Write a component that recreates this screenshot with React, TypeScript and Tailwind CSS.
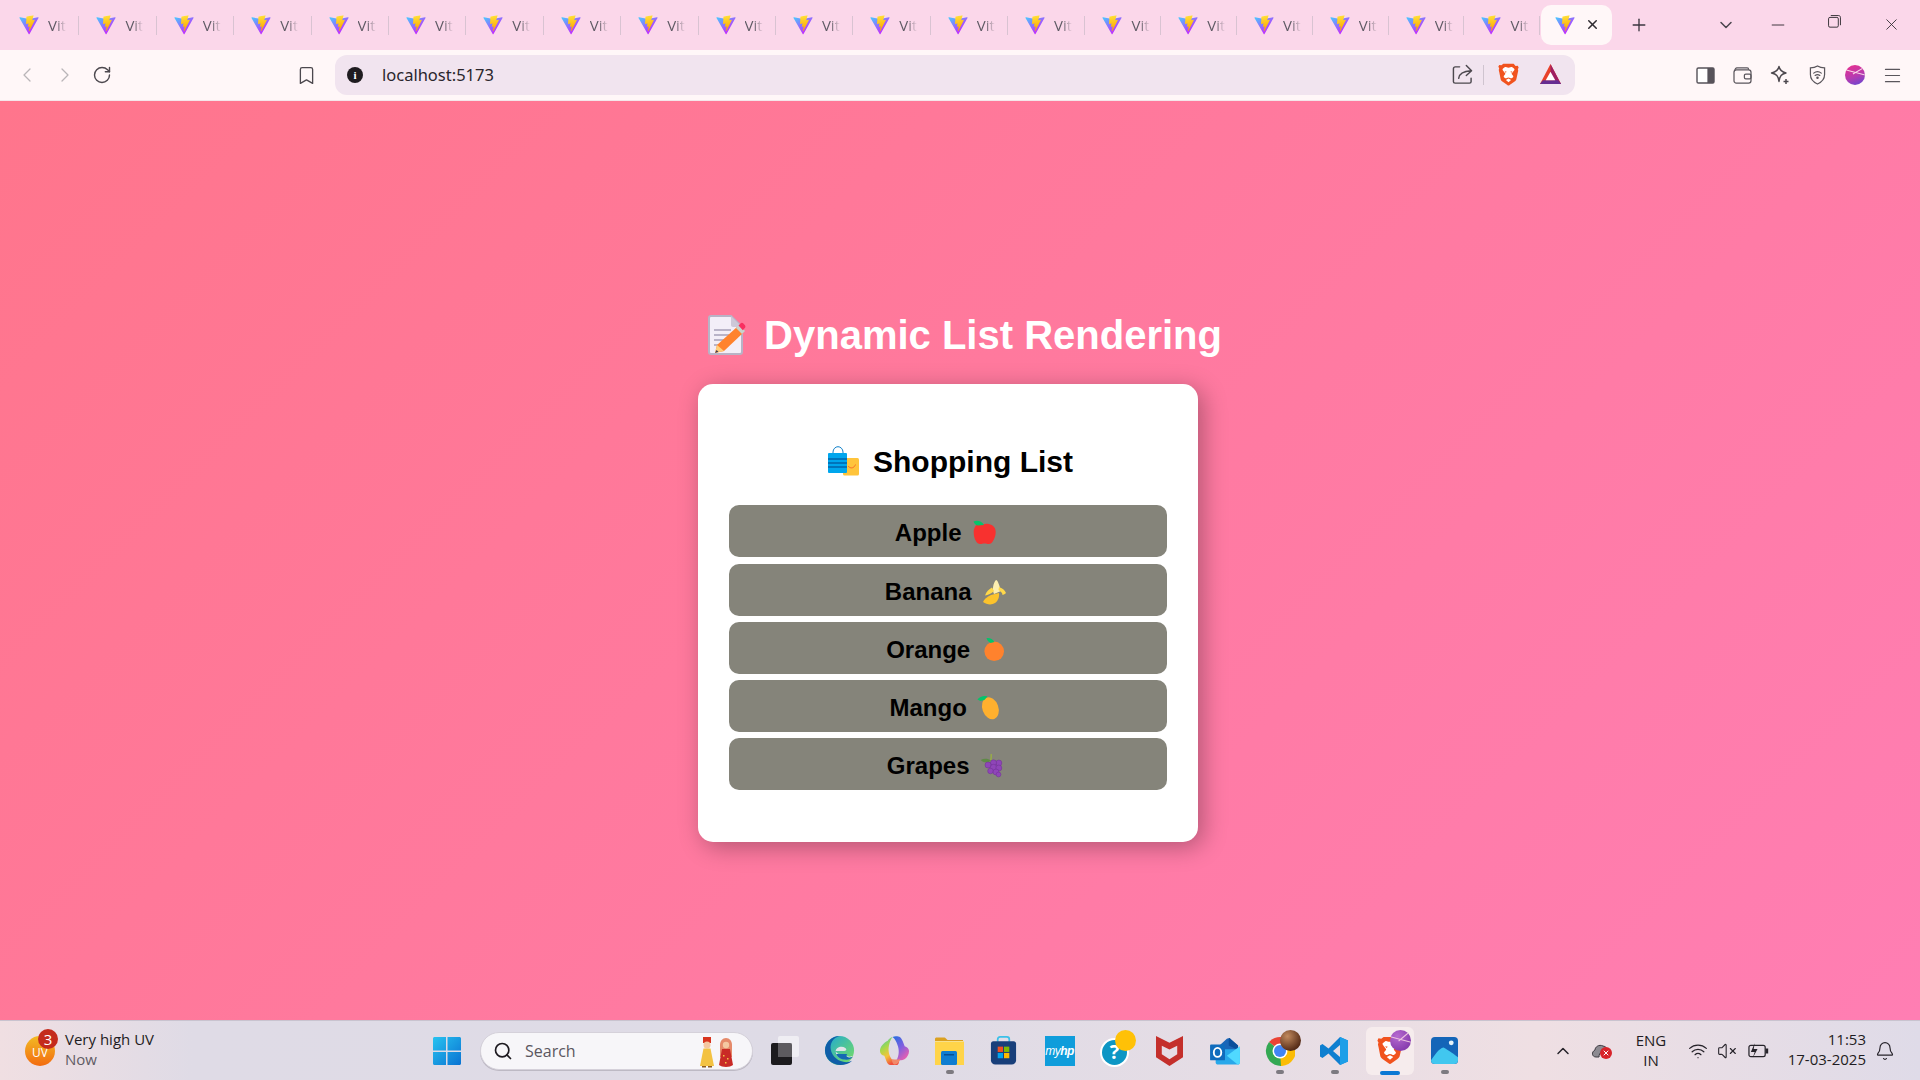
import {
  ChevronDown,
  ChevronLeft,
  ChevronRight,
  ChevronUp,
  Bell,
  Bookmark,
  Menu,
  Minus,
  Plus,
  RotateCw,
  Search,
  Wifi,
  VolumeX,
  X,
} from "lucide-react"
import type { ReactNode } from "react"

const VitePaths = () => (
  <>
    <defs>
      <linearGradient id="viteA" x1="6" y1="33" x2="235" y2="344" gradientUnits="userSpaceOnUse">
        <stop stopColor="#41D1FF" />
        <stop offset="1" stopColor="#BD34FE" />
      </linearGradient>
      <linearGradient id="viteB" x1="194" y1="8" x2="236" y2="292" gradientUnits="userSpaceOnUse">
        <stop stopColor="#FFEA83" />
        <stop offset="0.08" stopColor="#FFDD35" />
        <stop offset="1" stopColor="#FFA800" />
      </linearGradient>
    </defs>
    <path
      d="M399.641 59.5246L215.643 388.545C211.844 395.338 202.084 395.378 198.228 388.618L10.5817 59.5563C6.38087 52.1896 12.6802 43.2665 21.0281 44.7586L205.223 77.6824C206.398 77.8924 207.601 77.8904 208.776 77.6763L389.119 44.8058C397.439 43.2894 403.768 52.1434 399.641 59.5246Z"
      fill="url(#viteA)"
    />
    <path
      d="M292.965 1.5744L156.801 28.2552C154.563 28.6937 152.906 30.5903 152.771 32.8664L144.395 174.33C144.198 177.662 147.258 180.248 150.51 179.498L188.42 170.749C191.967 169.931 195.172 173.055 194.443 176.622L183.18 231.775C182.422 235.487 185.907 238.661 189.532 237.56L212.947 230.446C216.577 229.344 220.065 232.527 219.297 236.242L201.398 322.875C200.278 328.294 207.486 331.249 210.492 326.603L212.5 323.5L323.454 102.072C325.312 98.3645 322.108 94.137 318.036 94.9228L279.014 102.454C275.347 103.161 272.227 99.746 273.262 96.1583L298.731 7.86689C299.767 4.27314 296.636 0.855181 292.965 1.5744Z"
      fill="url(#viteB)"
    />
  </>
)

const ViteIcon = () => (
  <svg viewBox="0 0 410 404" className="w-5 h-5 shrink-0">
    <VitePaths />
  </svg>
)

function ViteTab({ wide }: { wide: boolean }) {
  return (
    <div className={`${wide ? "w-[77.4px]" : "w-[75.8px]"} h-[50px] shrink-0 flex items-center pl-[17px] relative`}>
      <ViteIcon />
      <span className="ml-[9px] text-[15px] bg-[linear-gradient(90deg,#5c5862_45%,#5c586200)] bg-clip-text text-transparent">
        Vit
      </span>
      <span className="absolute right-0 top-[16px] h-[19px] w-px bg-[#d9c3d2]" />
    </div>
  )
}

function Cell({ children }: { children: ReactNode }) {
  return <div className="w-[37.4px] h-[38px] shrink-0 flex items-center justify-center">{children}</div>
}

const BraveLion = ({ size = 22 }: { size?: number }) => (
  <svg viewBox="0 0 24 28" width={size} height={size * 1.15}>
    <path
      d="M6 1h12l2.2 2.6 2.6-.4 1 2.2-1 1.6.5 2-.6 2.6-1.6 7.2c-.4 1.4-1.2 2.2-2.4 3l-5 3.4c-1 .7-1.4 1-1.7 1s-.7-.3-1.7-1l-5-3.4c-1.2-.8-2-1.6-2.4-3L1.3 10.6.7 8l.5-2-1-1.6 1-2.2 2.6.4z"
      fill="#f1531e"
    />
    <path
      d="M12 5.5c1.6 0 3-.8 3.6-.8.8 0 3.4 2 3.4 2.7 0 .8-3.4 4.4-3.4 5.2 0 .9 2 2 2 3s-2 2.2-2.6 2.2c-.8 0-1.4-1-3-1s-2.2 1-3 1c-.6 0-2.6-1.2-2.6-2.2s2-2.1 2-3c0-.8-3.4-4.4-3.4-5.2 0-.7 2.6-2.7 3.4-2.7.6 0 2 .8 3.6.8z"
      fill="#fff"
    />
    <path d="M9 19.6 12 18l3 1.6-3 2.6z" fill="#fff" />
    <path d="M7.5 9.5l2.5.6-1.4 1.2zM16.5 9.5l-2.5.6 1.4 1.2z" fill="#f1531e" />
  </svg>
)

function Emoji({ children }: { children: ReactNode }) {
  return (
    <svg viewBox="1 0 33 32" width={33} height={32} className="inline-block shrink-0">
      {children}
    </svg>
  )
}

const fruits: { name: string; icon: ReactNode }[] = [
  {
    name: "Apple",
    icon: (
      <>
        <path d="M11 9c2-.6 3.700-.2 5.300.3 1.700-.6 3.600-.9 5.500-.3 4.200 1 6.900 3.600 6.900 8 0 3.300-1.100 6.300-2.700 9-1 1.800-2.400 3-4.300 3-1.500 0-2.400-.6-4.200-.6s-2.800.6-4.300.6c-1.900 0-3.300-1.200-4.300-3-1.600-2.700-2.200-5.700-2.200-9 0-4.100 2.300-7.200 4.300-8z" fill="#f8312f" />
        <path d="M6.500 6.500c3.500-1.300 8-.8 10.500 3.500l-6.500.6c-2-.6-3.500-2.200-4-4.100z" fill="#05c46b" />
      </>
    ),
  },
  {
    name: "Banana",
    icon: (
      <>
        <path d="M19 6c2 0 3.500 6 5 11l-7 3c-2-4-1-11 2-14z" fill="#fdefb0" />
        <path d="M6 28c1-3 4-5 8-7l8-2c.5 4-1 8-4 10-3 2-8 2-12-1z" fill="#fcc32c" />
        <path d="M15 13.500c-3 1.500-6 4.500-7 8 3-.5 6.500-2 9-4.500z" fill="#ffd84a" />
        <path d="M22 13c3 1 6 3 7 6-.2.500-3 2-3.500 2 .2-2-2-4-4-5z" fill="#ffd84a" />
      </>
    ),
  },
  {
    name: "Orange",
    icon: (
      <>
        <ellipse cx="18.200" cy="19.300" rx="9.800" ry="9.700" fill="#ff822d" />
        <path d="M10.500 6c3-.5 6 .5 8 4l-4 1c-2-1-3.500-3-4-5z" fill="#05c46b" />
      </>
    ),
  },
  {
    name: "Mango",
    icon: (
      <>
        <ellipse cx="17.400" cy="18.300" rx="8" ry="11.300" transform="rotate(-20 17.400 18.300)" fill="#ffb02e" />
        <path d="M4.400 9.500c2.500-3 6.500-4.200 10-3l-3 3.500-4 1z" fill="#05c46b" />
      </>
    ),
  },
  {
    name: "Grapes",
    icon: (
      <>
        <path d="M15.600 6l1.200.1c.1 2.500-.1 4.700-.5 6.900l-1.200-.1c.4-2.300.5-4.600.5-6.900z" fill="#9cb53b" />
        <path d="M5.700 12c3-1.800 7-1.800 10.300.4-2.500 2.500-7.700 2.800-10.300-.4z" fill="#5f8a46" />
        <g fill="#8f45b8" stroke="#6f2f94" strokeWidth=".5">
          <circle cx="23.800" cy="15" r="3" />
          <circle cx="18.500" cy="14.800" r="3" />
          <circle cx="13" cy="17" r="3" />
          <circle cx="18.500" cy="19.500" r="3.200" />
          <circle cx="23.800" cy="20" r="3" />
          <circle cx="15.500" cy="23" r="2.800" />
          <circle cx="21" cy="24" r="3" />
          <circle cx="23.500" cy="26.500" r="2.400" />
        </g>
      </>
    ),
  },
]

function Taskbar({ children, dot, ml }: { children: ReactNode; dot?: boolean; ml?: string }) {
  return (
    <div className={`w-[55px] h-[48px] shrink-0 flex items-center justify-center relative ${ml ?? ""}`}>
      {children}
      {dot && <span className="absolute bottom-[1px] left-[24px] w-[8px] h-[4px] rounded-full bg-[#7d7a80]" />}
    </div>
  )
}

const Overlay = ({ c1, c2, c3, lines }: { c1: string; c2: string; c3?: string; lines?: boolean }) => (
  <span
    className={`absolute top-[3px] ${lines ? "right-[3px]" : "right-[6px]"} w-[21px] h-[21px] rounded-full overflow-hidden`}
    style={{ background: `radial-gradient(circle at 35% 30%, ${c1}, ${c2} 70%, ${c3 ?? c2})` }}
  >
    {lines && (
      <>
        <span className="absolute left-0 top-[9px] w-[22px] h-px rotate-[15deg] bg-[#eec4e0]" />
        <span className="absolute left-[7px] top-[6px] w-[14px] h-px rotate-[-40deg] bg-[#eec4e0]" />
      </>
    )}
  </span>
)

export default function App() {
  return (
    <div className="h-screen w-full overflow-hidden flex flex-col font-['Open_Sans',sans-serif]">
      {/* tab strip */}
      <div className="h-[50px] shrink-0 bg-[#fbd7ea] flex items-center pl-[2px]">
        {Array.from({ length: 14 }).map((_, i) => (
          <ViteTab key={i} wide />
        ))}
        {Array.from({ length: 6 }).map((_, i) => (
          <ViteTab key={i} wide={false} />
        ))}
        <div className="ml-[1px] mt-[-1px] w-[71px] h-[40px] shrink-0 rounded-[10px] bg-[#fff7f8] flex items-center pl-[14px]">
          <ViteIcon />
          <X size={15} strokeWidth={2.4} className="ml-[10px] text-[#2f2b30]" />
        </div>
        <div className="w-[44px] ml-[5px] flex justify-center">
          <Plus size={20} strokeWidth={1.6} className="text-[#3b3740]" />
        </div>
        <ChevronDown size={20} strokeWidth={1.8} className="ml-[55px] text-[#4a454d]" />
        <div className="ml-auto flex text-[#2f2b30]">
          <div className="w-[56.5px] flex justify-center">
            <Minus size={20} strokeWidth={1.1} />
          </div>
          <div className="w-[56.5px] flex justify-center">
            <svg viewBox="0 0 14 14" className="w-[13px] h-[13px]" fill="none" stroke="currentColor" strokeWidth="1">
              <rect x="0.6" y="2.6" width="10.5" height="10.5" rx="1.5" />
              <path d="M3 .6h8.500c1 0 1.900.9 1.900 1.900V11" />
            </svg>
          </div>
          <div className="w-[56.5px] ml-[1px] flex justify-center">
            <X size={19} strokeWidth={1.1} />
          </div>
        </div>
      </div>

      {/* toolbar */}
      <div className="h-[51px] shrink-0 bg-[#fff7f8] border-b border-[#f4e6ea] flex items-center pl-[8px] pr-[9px]">
        <div className="w-[38px] flex justify-center">
          <ChevronLeft size={24} strokeWidth={1.3} className="text-[#b9b5b8]" />
        </div>
        <div className="w-[37px] flex justify-center">
          <ChevronRight size={24} strokeWidth={1.3} className="text-[#b9b5b8]" />
        </div>
        <div className="w-[37px] flex justify-center">
          <RotateCw size={20} strokeWidth={1.7} className="text-[#4c484e]" />
        </div>
        <div className="ml-[167px] w-[38px] flex justify-center">
          <Bookmark size={21} strokeWidth={1.5} className="text-[#4c484e]" />
        </div>
        <div className="ml-[10px] w-[1240px] h-[40px] rounded-[12px] bg-[#f1e4ef] flex items-center pl-[12px] pr-[13px]">
          <span className="w-4 h-4 rounded-full bg-[#1f1c20] flex items-center justify-center text-white text-[11px] font-bold font-['Liberation_Serif',serif]">
            i
          </span>
          <span className="ml-[19px] text-[16.5px] text-[#2a262c] font-['Noto_Sans',sans-serif]">localhost:5173</span>
          <div className="ml-auto flex items-center">
            <svg viewBox="0 0 22 22" className="w-[21px] h-[21px]" fill="none" stroke="#4c484e" strokeWidth="1.5" strokeLinecap="round" strokeLinejoin="round">
              <path d="M8 3H3.500C2.300 3 1.500 4 1.500 5v13.500c0 1 .8 1.500 1.800 1.500h15c1 0 1.700-.6 1.700-1.500V15" />
              <path d="M7 15c.5-5 4-7.500 13-8M15 1.500l5.500 5.500-5.500 5" />
            </svg>
            <span className="ml-[10px] h-[20px] w-px bg-[#cfc4cf]" />
            <span className="ml-[14px] flex">
              <BraveLion size={21} />
            </span>
            <svg viewBox="0 0 24 22" className="ml-[20px] w-[23px] h-[21px]">
              <path d="M12 0 23 21H1z" fill="#e8412a" />
              <path d="M12 0 23 21h-6L12 11z" fill="#9e1f63" />
              <path d="M1 21h22l-3-4H4z" fill="#662d91" />
              <path d="M12 8l5 9H7z" fill="#fff" />
            </svg>
          </div>
        </div>
        <div className="ml-auto flex items-center text-[#5a565c]">
          <Cell>
            <svg viewBox="0 0 20 18" className="w-[19px] h-[17px]">
              <rect x="1" y="1" width="18" height="16" rx="1.5" fill="#fff" stroke="#57535a" strokeWidth="1.5" />
              <rect x="12" y="1" width="7" height="16" fill="#57535a" />
            </svg>
          </Cell>
          <Cell>
            <svg viewBox="0 0 20 18" className="w-[19px] h-[17px]" fill="none" stroke="#5a565c" strokeWidth="1.3">
              <path d="M2 3.500C2 2 3 1 4 1h11c1 0 1.500.8 1.500 1.800" />
              <rect x="1" y="3" width="18" height="14" rx="2.5" />
              <rect x="12" y="7.5" width="7" height="5" rx="1.5" />
            </svg>
          </Cell>
          <Cell>
            <svg viewBox="0 0 20 20" className="w-[20px] h-[20px]" fill="none" stroke="#4c484e" strokeWidth="1.4" strokeLinejoin="round">
              <path d="M9 1.500c.7 3.700 2.500 5.500 7 6.500-4.500 1-6.300 2.800-7 8.500-.7-5.700-2.500-7.500-7.500-8.500C6.500 7 8.300 5.200 9 1.500z" />
              <path d="M16 14v5M13.500 16.500h5" strokeWidth="1.5" />
            </svg>
          </Cell>
          <Cell>
            <svg viewBox="0 0 18 21" className="w-[17px] h-[20px]" fill="none" stroke="#5a565c" strokeWidth="1.3" strokeLinecap="round">
              <path d="M9 1c2 1.300 4.500 2 7.500 2v7c0 4.500-3 8-7.500 10-4.500-2-7.500-5.500-7.500-10V3C4.500 3 7 2.300 9 1z" />
              <path d="M5 8.500c2.400-2 5.600-2 8 0M6.500 11c1.500-1.200 3.500-1.200 5 0" />
              <circle cx="9" cy="13.5" r=".7" fill="#5a565c" />
            </svg>
          </Cell>
          <Cell>
            <span className="w-[20px] h-[20px] rounded-full bg-[linear-gradient(160deg,#ec2f8c,#b73bb0_55%,#5d47d6)] relative overflow-hidden">
              <span className="absolute left-0 top-[7px] w-[22px] h-px rotate-[15deg] bg-[#f8d8e8]" />
              <span className="absolute left-[7px] top-[5px] w-[14px] h-px rotate-[-30deg] bg-[#f8d8e8]" />
            </span>
          </Cell>
          <Cell>
            <Menu size={21} strokeWidth={1.4} className="text-[#5a565c]" />
          </Cell>
        </div>
      </div>

      {/* page */}
      <main className="flex-1 min-h-0 bg-[linear-gradient(135deg,#ff758c,#ff7eb3)] flex flex-col items-center pt-[210px]">
        <h1 className="ml-[10px] h-[48px] flex items-center text-[40px] font-bold text-white font-['Liberation_Sans',sans-serif]">
          <svg viewBox="0 0 38 40" className="w-[38px] h-[40px] mr-[18px]">
            <path d="M3 1h20l11 11v25c0 1.200-.9 2-2 2H3c-1.200 0-2-.8-2-2V3c0-1.200.8-2 2-2z" fill="#f3eef8" stroke="#b8b3c6" strokeWidth="2" />
            <path d="M23 1v9c0 1.200.9 2 2 2h9z" fill="#cdc8d8" />
            <path d="M6 15h17M6 20h15M6 25h11M6 30h6" stroke="#a7a0b8" strokeWidth="1.5" />
            <path d="M29 12l6 6-19 18-9 2 2-8z" fill="#ff822d" />
            <path d="M9 30l7 6-9 2z" fill="#ffce7c" />
            <path d="M7 38l1.500-3 2 1.800z" fill="#433b53" />
            <path d="M28 13l3-3 6 6-3 3z" fill="#c8d4cd" />
            <path d="M31 9l2-2c.9-.9 2-.9 2.900 0l1.600 1.700c.6.900.6 2-.2 2.800l-2 2.200z" fill="#f92f60" transform="translate(-.5 1.5)" />
          </svg>
          Dynamic List Rendering
        </h1>
        <section className="mr-[24px] mt-[25px] w-[500px] h-[458px] shrink-0 bg-white rounded-[15px] shadow-[5px_5px_25px_rgba(0,0,0,0.3)] pt-[56px] px-[31px] font-['Liberation_Sans',sans-serif]">
          <h2 className="h-[40px] pt-[2px] pl-[5px] flex items-center justify-center text-[30px] font-bold text-black">
            <svg viewBox="0 0 31 30" className="w-[31px] h-[30px] mr-[14px]">
              <rect x="15" y="12" width="16" height="17.500" rx="1.500" fill="#ffc43b" />
              <path d="M20 20c2.500 3 6 2.500 7.500-1.500" fill="none" stroke="#f8742a" strokeWidth="1" />
              <path d="M5 8V6c0-3 2.500-5.300 5-5.300S15 3 15 6v2" fill="none" stroke="#0e7fc9" strokeWidth="1" />
              <rect x="0" y="7" width="19" height="20" rx="1" fill="#00a6ed" />
              <path d="M0 13h19M0 17h19M0 21h19" stroke="#0074ba" strokeWidth="2" />
            </svg>
            Shopping List
          </h2>
          <ul className="mt-[25px] flex flex-col gap-[6px]">
            {fruits.map((f) => (
              <li
                key={f.name}
                className="h-[52px] first:mb-[1px] rounded-[10px] bg-[#85847a] flex items-center justify-center text-[24px] font-bold text-black whitespace-pre"
              >
                <span className="pt-[3px]">{f.name} </span>
                <Emoji>{f.icon}</Emoji>
              </li>
            ))}
          </ul>
        </section>
      </main>

      {/* windows taskbar */}
      <footer className="h-[60px] shrink-0 border-t border-[#c9c3cf] bg-[linear-gradient(90deg,#f0dfe2,#dfdbe6_10%,#dedbe6_45%,#e6dde5_65%,#efdfe3_80%,#dfdbe8)] flex items-center font-['Open_Sans',sans-serif]">
        <div className="w-[420px] shrink-0 flex items-center pl-[25px] relative">
          <span className="w-[30px] h-[30px] rounded-full bg-[linear-gradient(180deg,#f2bb24,#f36b0f)] flex items-center justify-center text-white text-[12px] pt-[4px]">
            UV
          </span>
          <span className="absolute left-[38px] top-[-3px] w-[20px] h-[20px] rounded-full bg-[#c42b1c] text-white text-[15px] flex items-center justify-center">
            3
          </span>
          <div className="ml-[10px] mt-[-3px] flex flex-col text-[15px] leading-[20px]">
            <span className="text-[#1f1c22]">Very high UV</span>
            <span className="text-[#5f5b63]">Now</span>
          </div>
        </div>

        <Taskbar>
          <svg viewBox="0 0 30 30" className="w-[30px] h-[30px] mr-[2px]">
            <defs>
              <linearGradient id="win" x1="0" y1="0" x2="1" y2="1">
                <stop stopColor="#28c3f0" />
                <stop offset="1" stopColor="#0a72d2" />
              </linearGradient>
            </defs>
            <path d="M1 2.500C1 1.700 1.700 1 2.500 1H14v13.500H1zM15.500 1H27.500c.8 0 1.500.7 1.500 1.500v12H15.500zM1 16h13v13H2.500C1.700 29 1 28.300 1 27.500zM15.500 16H29v11.500c0 .8-.7 1.500-1.500 1.500h-12z" fill="url(#win)" />
          </svg>
        </Taskbar>
        <div className="ml-[5px] w-[273px] h-[38px] shrink-0 rounded-full bg-[#f7f6f9] border border-[#d5d1da] shadow-[0_1px_0_#bdb9c4] flex items-center pl-[12px] relative">
          <Search size={20} strokeWidth={2} className="text-[#1d1a20]" />
          <span className="ml-[12px] text-[16px] text-[#5b5760]">Search</span>
          <svg viewBox="0 0 36 32" className="absolute right-[18px] top-[3px] w-[36px] h-[32px]">
            <rect x="5" y="1" width="8" height="6" fill="#d8351f" />
            <circle cx="9" cy="9" r="3.500" fill="#f4c7a1" />
            <path d="M5.500 12.500h7L16 30H2z" fill="#f3c242" />
            <path d="M4 30h4v1.500H4zM10 30h4v1.500h-4z" fill="#8a5a22" />
            <path d="M22 9c0-4 2.500-7 6-7s6 3 6 7v12H22z" fill="#e58a6a" />
            <circle cx="28" cy="9" r="3.200" fill="#f4c7a1" />
            <path d="M24 13h8l3 16c-3 2.500-11 2.500-14 0z" fill="#c92a26" />
            <path d="M25 19h1.500v1.500H25zM29 22h1.500v1.500H29zM27 26h1.500v1.500H27z" fill="#f3c242" />
          </svg>
        </div>
        <Taskbar>
          <svg viewBox="0 0 30 30" className="w-[30px] h-[30px] ml-[8px]">
            <rect x="8" y="0" width="21" height="21" rx="2" fill="#f2f1f4" opacity=".85" />
            <rect x="1" y="7" width="21" height="22" rx="2" fill="#1c1b1e" />
            <rect x="8" y="7" width="14" height="14" fill="#9d9ca0" opacity=".5" />
          </svg>
        </Taskbar>

        <Taskbar ml="ml-[4px]">
          <svg viewBox="0 0 32 32" className="w-[31px] h-[31px]">
            <defs>
              <linearGradient id="edgeA" x1="0" y1="0" x2="1" y2="1">
                <stop stopColor="#1ca6d8" />
                <stop offset="1" stopColor="#7be05e" />
              </linearGradient>
            </defs>
            <circle cx="16" cy="16" r="15" fill="url(#edgeA)" />
            <path d="M1 16C1 7 9 1 16 1c-7 2-10 8-9 14 1 7 8 13 16 13 2 0 4-.5 6-1.500-3 3-7.500 4.500-12 4.500C8 31 1 24 1 16z" fill="#0f5ea8" />
            <path d="M12 17c0-3 3-5 6-5 3 0 5 1.500 5 3 0 1-1 1.500-2 1.500h-9zM12 17c0 5 5 8 10 8 3 0 6-1 8-3.500-2 1-4 1-6 .5-4-.8-9-1-12-5z" fill="#e0e3e8" />
            <path d="M12 17c0 5 5 8.500 11 8.500 3 0 5-1 7-3-1 .5-3 1-5 .5-2-.4-2.500-2.500-1-3.500h-12z" fill="#1668b3" />
          </svg>
        </Taskbar>
        <Taskbar>
          <svg viewBox="0 0 32 32" className="w-[31px] h-[31px]">
            <defs>
              <linearGradient id="copA" x1="0" y1="0" x2="0.7" y2="1">
                <stop stopColor="#1f6fe0" />
                <stop offset=".55" stopColor="#7f5fe0" />
                <stop offset="1" stopColor="#e85fb0" />
              </linearGradient>
              <linearGradient id="copB" x1="0" y1="0" x2="0.5" y2="1">
                <stop stopColor="#2fc4c4" />
                <stop offset=".4" stopColor="#a8d84a" />
                <stop offset=".7" stopColor="#f5c33a" />
                <stop offset="1" stopColor="#f0503e" />
              </linearGradient>
            </defs>
            <path d="M14 2c2-1 4-1 6-.5 2.500.5 3.500 2.500 4.500 5l2 5c2.500.8 4.500 2.500 4.500 5 0 3.500-2 6.500-4 8-1.500 1.200-3.500 1.500-6 1.500h-3c3-5 3-11 1-16-1-3-2.500-6-5-8z" fill="url(#copA)" />
            <path d="M9 6c1-2 3-3.500 5-4-2.500 3-4.500 9-4 15 .3 3 1.500 6 3.500 8.500l6 .5c2 1 1 5-1.500 5h-6c-2.500 0-3.500-2-4.500-4.500l-2-5C3 21 1 19 1 16.500 1 12 5 8 9 6z" fill="url(#copB)" />
            <path d="M13 25c3 .5 6 .5 9 0-1 3-3 5-5.500 5.500-2 .3-3-3-3.500-5.500z" fill="#f28a6a" />
          </svg>
        </Taskbar>
        <Taskbar dot>
          <svg viewBox="0 0 30 28" className="w-[30px] h-[28px] mr-[2px]">
            <path d="M1 2c0-1 .8-1.500 1.500-1.500h8c.8 0 2 1.500 3 2.500H29v4H1z" fill="#dba121" />
            <rect x="1" y="4" width="29" height="24" fill="#ffd449" />
            <rect x="1" y="4" width="29" height="1" fill="#f7e08d" />
            <rect x="7" y="14" width="16" height="14" rx="1.5" fill="#0f7dd1" />
            <rect x="10" y="17" width="10" height="1.5" fill="#074f93" />
          </svg>
        </Taskbar>
        <Taskbar>
          <svg viewBox="0 0 30 30" className="w-[29px] h-[29px] mr-[2px]">
            <path d="M9 6V3.500C9 2 10 1 11.500 1h7C20 1 21 2 21 3.500V6" fill="none" stroke="#3bc0e8" strokeWidth="1.8" />
            <path d="M2 8c0-1.500 1-2.500 2.500-2.500h21C27 5.500 28 6.500 28 8v17c0 2.500-2 4.500-4.500 4.500h-17C4 29.500 2 27.500 2 25z" fill="#183f7a" />
            <rect x="9" y="11" width="5.5" height="5.5" fill="#f25022" />
            <rect x="15.500" y="11" width="5.5" height="5.5" fill="#7fba00" />
            <rect x="9" y="17.500" width="5.5" height="5.5" fill="#00a4ef" />
            <rect x="15.500" y="17.500" width="5.5" height="5.5" fill="#ffb900" />
          </svg>
        </Taskbar>
        <Taskbar>
          <div className="w-[30px] h-[30px] bg-[#0f9ddb] flex items-center justify-center text-white text-[12px] italic font-['Liberation_Sans',sans-serif] tracking-[-0.5px]">
            my<span className="font-bold">hp</span>
          </div>
        </Taskbar>
        <Taskbar>
          <div className="w-[29px] h-[29px] mt-[3px] rounded-full bg-[#0d96c4] border-2 border-white flex items-center justify-center text-white text-[20px] font-bold">
            ?
          </div>
          <Overlay c1="#ffc107" c2="#ffc107" />
        </Taskbar>
        <Taskbar>
          <svg viewBox="0 0 28 32" className="w-[27px] h-[31px]">
            <path d="M0 1l14 7 14-7v22l-14 9-14-9z" fill="#c42f2b" />
            <path d="M6 11l8 4 8-4v9l-8 5-8-5z" fill="#e6dce4" />
          </svg>
        </Taskbar>
        <Taskbar>
          <svg viewBox="0 0 32 30" className="w-[30px] h-[28px]">
            <path d="M8 11l10-9c1-1 2-1 3 0l9 7v14H8z" fill="#1a66b8" />
            <path d="M20 1h1l9 8v5l-10-5z" fill="#0a4f9c" />
            <path d="M6 13h26v14c0 1.500-1 2.500-2.500 2.500H8.500C7 29.500 6 28.500 6 27z" fill="#28a8ea" />
            <path d="M18 20l14-10v17c0 1.500-1 2.500-2.500 2.500z" fill="#50d9ff" />
            <rect x="0" y="8" width="16" height="17" rx="1" fill="#0f6cbd" />
            <ellipse cx="8" cy="16.500" rx="4" ry="4.800" fill="none" stroke="#fff" strokeWidth="2" />
          </svg>
        </Taskbar>
        <Taskbar dot>
          <svg viewBox="0 0 30 30" className="w-[30px] h-[30px]">
            <path d="M15 15 4 6a15 15 0 0 1 24 2z" fill="#ea4335" />
            <path d="M15 15 29 8a15 15 0 0 1-14 22z" fill="#fbbc05" />
            <path d="M15 15l1 15A15 15 0 0 1 4 6z" fill="#34a853" />
            <circle cx="15" cy="15" r="7.5" fill="#fff" />
            <circle cx="15" cy="15" r="6" fill="#4285f4" />
          </svg>
          <Overlay c1="#c28a5e" c2="#5a2f1a" c3="#3a2012" />
        </Taskbar>
        <Taskbar dot>
          <svg viewBox="0 0 30 30" className="w-[30px] h-[30px] mr-[2px]">
            <path d="M21 1 9.500 12.500 3.500 8 1 9.500v11L3.500 22l6-4.500L21 29l8-3.500v-21zM21 9v12l-7-6z" fill="#0f7fd0" />
            <path d="M21 1l8 3.500v21L21 29z" fill="#1d9fe8" />
          </svg>
        </Taskbar>
        <div className="w-[48px] h-[48px] mx-[3.5px] shrink-0 rounded-[6px] bg-[#f6eced] flex items-center justify-center relative">
          <BraveLion size={26} />
          <Overlay c1="#b66ad0" c2="#8a3fb0" lines />
          <span className="absolute bottom-0 left-[14px] w-[20px] h-[4px] rounded-full bg-[#0a78d4]" />
        </div>
        <Taskbar dot>
          <svg viewBox="0 0 28 28" className="w-[27px] h-[27px]">
            <rect width="28" height="28" rx="4" fill="#1465b8" />
            <path d="M0 24c4-5 8-12 13-13 4 2 8 5 15 10v3c0 2.200-1.800 4-4 4H4c-2.200 0-4-1.800-4-4z" fill="#41c7ef" />
            <circle cx="21" cy="6" r="2.5" fill="#e6f3fa" />
          </svg>
        </Taskbar>

        <div className="ml-[81px] w-[20px] flex justify-center">
          <ChevronUp size={20} strokeWidth={1.8} className="text-[#26232a]" />
        </div>
        <div className="ml-[18px] w-[20px] relative">
          <svg viewBox="0 0 20 16" className="w-[20px] h-[16px]">
            <path d="M5 14c-4 0-5-5-1-7 0-3 4-6 8-4 3 .5 4 2 4 5-4-1-8 1-8 6z" fill="#8d8a91" stroke="#3e3b42" strokeWidth="1" />
          </svg>
          <span className="absolute left-[9px] top-[4px] w-[12px] h-[12px] rounded-full bg-[#d8232a] text-white flex items-center justify-center">
            <X size={8} strokeWidth={3} />
          </span>
        </div>
        <div className="ml-[25px] mt-[-2px] w-[30px] flex flex-col items-center text-[15px] leading-[20px] text-[#1f1c22]">
          <span>ENG</span>
          <span>IN</span>
        </div>
        <div className="ml-[22px] flex items-center text-[#26232a]">
          <Wifi size={20} strokeWidth={1.5} />
          <VolumeX size={20} strokeWidth={1.3} className="ml-[9px]" />
          <svg viewBox="0 0 22 16" className="ml-[11px] w-[21px] h-[16px]" fill="none" stroke="#26232a" strokeWidth="1.3">
            <rect x="1" y="2" width="17" height="12" rx="2" />
            <path d="M19 6v4h1.500V6z" fill="#26232a" />
            <path d="M7 0 3 9h4l-2 6 5-9H6z" fill="#26232a" stroke="none" />
          </svg>
        </div>
        <div className="ml-[11px] mt-[-3px] w-[86px] flex flex-col items-end text-[15px] leading-[20px] text-[#1f1c22]">
          <span>11:53</span>
          <span>17-03-2025</span>
        </div>
        <Bell size={20} strokeWidth={1.4} className="ml-[9px] text-[#26232a]" />
      </footer>
    </div>
  )
}
